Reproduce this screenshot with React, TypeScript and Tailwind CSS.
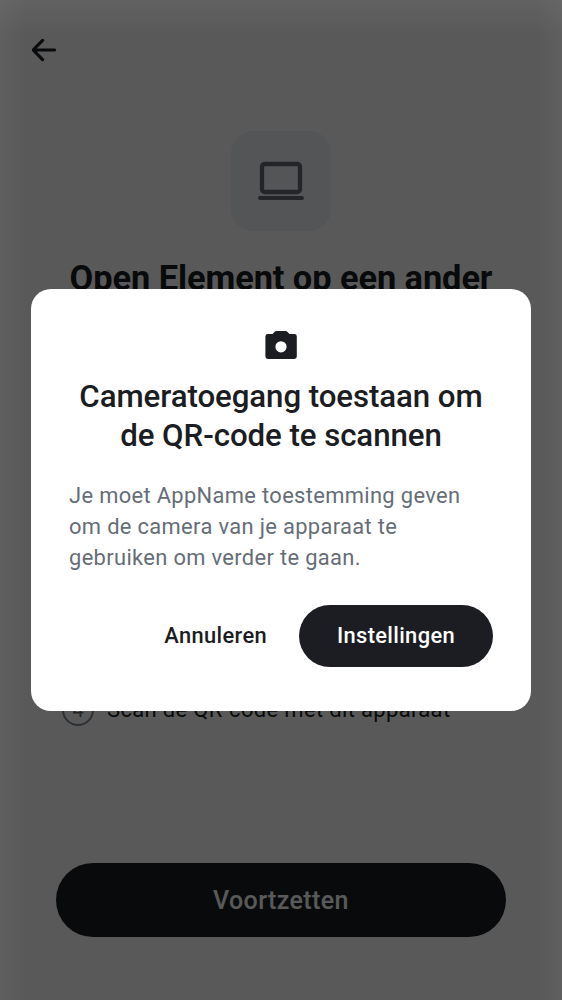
function BackArrow() {
  return (
    <svg className="h-6 w-6" viewBox="0 0 24 24" fill="none" stroke="#1b1d22" strokeWidth="3.1" strokeLinecap="round" strokeLinejoin="round">
      <path d="M11 2.4 1.5 12l9.5 9.6M2 12h21" transform="translate(-.4 0)" />
    </svg>
  );
}

function Laptop() {
  return (
    <svg className="h-[50px] w-[50px]" viewBox="0 0 50 50" fill="none" stroke="#656d77">
      <rect x="6" y="8" width="38" height="28" rx="2.8" strokeWidth="4.3" />
      <path d="M4 42h42" strokeWidth="4" strokeLinecap="round" />
    </svg>
  );
}

function Camera() {
  return (
    <svg className="h-[30px] w-8" viewBox="0 0 32 30" fill="#1b1d22" fillRule="evenodd">
      <path d="M11.6 1h8.8a3 3 0 0 1 2.2 1L24.4 4H29.4a2.4 2.4 0 0 1 2.4 2.4V26.6a2.4 2.4 0 0 1-2.4 2.4H2.8A2.4 2.4 0 0 1 .4 26.6V6.4A2.4 2.4 0 0 1 2.8 4h4.8l1.8-2a3 3 0 0 1 2.2-1ZM16 11.2a5.6 5.6 0 1 0 0 11.2 5.6 5.6 0 0 0 0-11.2Z" />
    </svg>
  );
}

function Screen() {
  return (
    <main className="flex h-full flex-col bg-white">
      <header className="flex h-[100px] items-center pl-8">
        <BackArrow />
      </header>
      <section className="mt-[31px] flex flex-col items-center">
        <div className="flex h-[100px] w-[100px] items-center justify-center rounded-[22px] bg-[#f0f2f5]">
          <Laptop />
        </div>
        <h1 className="mt-[25px] whitespace-nowrap text-[34.4px] leading-[44px] font-bold tracking-[-0.08px] text-[#1b1d22]">Open Element op een ander</h1>
      </section>
      <ol className="mt-[393.5px] px-[62px]">
        <li className="flex h-8 items-center gap-[13px]">
          <span className="flex h-8 w-8 items-center justify-center rounded-full border-2 border-[#818a95] text-[20px] text-[#656d77]">4</span>
          <span className="whitespace-nowrap text-[22px] tracking-[0.33px] text-[#1b1d22]">Scan de QR-code met dit apparaat</span>
        </li>
      </ol>
      <div className="mt-auto px-14 pb-[63px]">
        <button className="h-[74.5px] w-full rounded-full bg-[#1b1d22] pt-px text-[25px] font-medium tracking-[0.4px] text-white">Voortzetten</button>
      </div>
    </main>
  );
}

function PermissionDialog() {
  return (
    <div role="dialog" aria-modal="true" className="flex h-[422px] w-[500px] flex-col rounded-[20px] bg-white px-[38px] pt-[41px]">
      <div className="flex justify-center">
        <Camera />
      </div>
      <h2 className="mt-[17px] text-center text-[31.25px] leading-[39px] font-medium tracking-[-0.08px] whitespace-nowrap text-[#1b1d22]">
        Cameratoegang toestaan om
        <br />
        de QR-code te scannen
      </h2>
      <p className="mt-[25px] text-[21.9px] leading-[31px] tracking-[0.34px] whitespace-nowrap text-[#656d77]">
        Je moet AppName toestemming geven
        <br />
        om de camera van je apparaat te
        <br />
        gebruiken om verder te gaan.
      </p>
      <div className="mt-8 flex items-center justify-end gap-8 text-[21.9px] font-medium tracking-[0.34px]">
        <button className="text-[#1b1d22]">Annuleren</button>
        <button className="h-[62px] w-[194px] rounded-full bg-[#1b1d22] text-white">Instellingen</button>
      </div>
    </div>
  );
}

export default function App() {
  return (
    <div className="relative h-[1000px] w-[562px] overflow-hidden font-['Roboto',sans-serif]">
      <Screen />
      <div className="absolute inset-0 bg-black/65" />
      <div className="absolute inset-0 bg-[linear-gradient(to_bottom,rgba(255,255,255,0.05),transparent_36px),linear-gradient(to_right,rgba(255,255,255,0.035),transparent_26px,transparent_536px,rgba(255,255,255,0.035))]" />
      <div className="absolute inset-0 flex items-center justify-center">
        <PermissionDialog />
      </div>
    </div>
  );
}
